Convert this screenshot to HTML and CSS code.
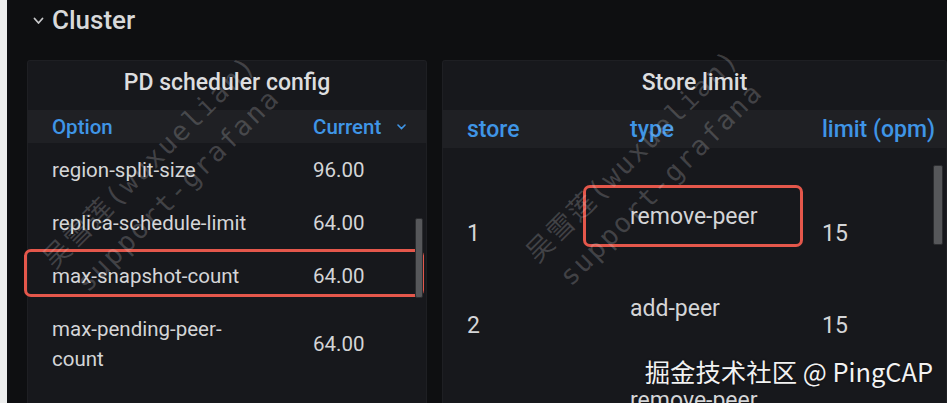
FILE: index.html
```html
<!DOCTYPE html>
<html lang="en">
<head>
  <meta charset="UTF-8" />
  <meta name="viewport" content="width=device-width, initial-scale=1.0"/>
  <title>Cluster</title>
  <link rel="stylesheet" href="styles.css">
</head>
<body>
  <div class="page">
    <div class="row-title">
      <svg class="row-chevron" width="11" height="8" viewBox="0 0 11 8">
        <polyline points="1.5,1.5 5.5,6 9.5,1.5" fill="none" stroke="#c7c8ca" stroke-width="1.8" stroke-linecap="round" stroke-linejoin="round"/>
      </svg>
      <span>Cluster</span>
    </div>

    <div class="panels">
      <section class="panel panel-pd">
        <h2 class="panel-title">PD scheduler config</h2>
        <div class="pd-head">
          <span class="opt">Option</span>
          <span class="val">Current
            <svg class="sort" width="9" height="6" viewBox="0 0 9 6">
              <polyline points="1,1 4.5,4.5 8,1" fill="none" stroke="#3f95e6" stroke-width="1.6" stroke-linecap="round"/>
            </svg>
          </span>
        </div>
        <div class="pd-row"><span class="opt">region-split-size</span><span class="val">96.00</span></div>
        <div class="pd-row"><span class="opt">replica-schedule-limit</span><span class="val">64.00</span></div>
        <div class="pd-row">
          <span class="opt">max-snapshot-count</span><span class="val">64.00</span>
          <div class="highlight hl-pd"></div>
        </div>
        <div class="pd-row"><span class="opt">max-pending-peer-count</span><span class="val">64.00</span></div>
        <div class="pd-row"><span class="opt">region-schedule-limit</span><span class="val">64.00</span></div>
        <div class="thumb thumb-pd"></div>
      </section>

      <section class="panel panel-store">
        <h2 class="panel-title">Store limit</h2>
        <div class="store-head">
          <span>store</span>
          <span>type</span>
          <span>limit (opm)</span>
        </div>
        <div class="store-body">
          <div class="store-row">
            <span class="num">1</span>
            <span class="type">remove-peer<div class="highlight hl-store"></div></span>
            <span class="num">15</span>
          </div>
          <div class="store-row">
            <span class="num">2</span>
            <span class="type">add-peer</span>
            <span class="num">15</span>
          </div>
          <div class="store-row">
            <span class="num"></span>
            <span class="type">remove-peer</span>
            <span class="num"></span>
          </div>
        </div>
        <div class="thumb thumb-store"></div>
      </section>
    </div>

    <div class="wm wm-left">吴雪莲(wuxuelian)<br>support-grafana</div>
    <div class="wm wm-right">吴雪莲(wuxuelian)<br>support-grafana</div>
    <div class="credit">掘金技术社区 @ PingCAP</div>
  </div>
</body>
</html>
```

FILE: styles.css
```css
:root {
  --page: #0e0f11;
  --panel: #17181c;
  --head: #1f2024;
  --text: #d4d5d7;
  --blue: #3f95e6;
  --mark: #e4574b;
}

body {
  margin: 0;
  background: #eceded;
  font-family: Roboto, 'Liberation Sans', sans-serif;
  color: var(--text);
  overflow: hidden;
}

.page {
  position: relative;
  margin-left: 7px;
  height: 403px;
  background: var(--page);
  overflow: hidden;
}

.row-title {
  display: flex;
  align-items: center;
  gap: 8px;
  height: 40px;
  padding-left: 26px;
  font-size: 26px;
  font-weight: 500;
  color: #d8d9da;
}

.row-chevron {
  margin-top: 2px;
}

.panels {
  display: flex;
  gap: 15px;
  margin-top: 20px;
  padding-left: 20px;
}

.panel {
  position: relative;
  background: var(--panel);
  border-radius: 3px;
  box-shadow: inset 0 0 0 1px rgba(255,255,255,0.03);
  height: 400px;
}

.panel-pd {
  width: 400px;
  font-size: 20.5px;
}

.panel-store {
  flex: 1;
  font-size: 23px;
}

.panel-title {
  margin: 0;
  height: 50px;
  display: flex;
  align-items: center;
  justify-content: center;
  padding-bottom: 6px;
  box-sizing: border-box;
  font-size: 23px;
  font-weight: 500;
  color: #dcdddf;
}

/* PD scheduler table */
.pd-head,
.pd-row {
  position: relative;
  display: flex;
  align-items: center;
}

.pd-head {
  height: 33px;
  background: var(--head);
  color: var(--blue);
  font-weight: 500;
}

.pd-row {
  padding: 11.5px 0;
  line-height: 30px;
}

.opt {
  width: 286px;
  padding: 0 56px 0 25px;
  box-sizing: border-box;
}

.val {
  display: flex;
  align-items: center;
}

.sort {
  margin-left: 16px;
}

/* Store limit table */
.store-head,
.store-row {
  display: grid;
  grid-template-columns: 163px 192px 1fr;
}

.store-head {
  height: 38px;
  align-items: center;
  background: var(--head);
  color: var(--blue);
  font-weight: 500;
}

.store-head span,
.store-row span {
  padding-left: 25px;
}

.store-body {
  padding-top: 40px;
}

.store-row {
  height: 92px;
  line-height: 30px;
}

.store-row .num {
  align-self: center;
}

.store-row .type {
  position: relative;
  padding-top: 14px;
}

/* annotation boxes */
.highlight {
  position: absolute;
  border: 3px solid var(--mark);
  border-radius: 7px;
  box-sizing: border-box;
  pointer-events: none;
}

.hl-pd {
  left: -3px;
  top: 0;
  width: 400px;
  height: 48px;
}

.hl-store {
  left: -22px;
  top: -3px;
  width: 220px;
  height: 62px;
}

.thumb {
  position: absolute;
  background: #56575a;
  border: 1px solid #2b2c2f;
  border-radius: 2px;
  box-sizing: border-box;
}

.thumb-pd {
  left: 388px;
  top: 158px;
  width: 8px;
  height: 80px;
}

.thumb-store {
  left: 491px;
  top: 105px;
  width: 10px;
  height: 80px;
}

/* watermarks */
.wm {
  position: absolute;
  transform: translate(-50%, -50%) rotate(-45deg);
  font-family: 'DejaVu Sans Mono', 'Noto Sans CJK SC', monospace;
  font-size: 27px;
  letter-spacing: 2px;
  line-height: 40px;
  text-align: center;
  white-space: nowrap;
  color: rgba(220,220,220,0.22);
  pointer-events: none;
}

.wm-left {
  left: 157px;
  top: 176px;
}

.wm-right {
  left: 640px;
  top: 170px;
}

.credit {
  position: absolute;
  right: 14px;
  top: 353px;
  font-family: 'Noto Sans CJK SC', 'Noto Sans', sans-serif;
  font-size: 25.4px;
  line-height: 36px;
  color: #f2f2f2;
  text-shadow: 0 0 2px rgba(0,0,0,0.5);
}
```
